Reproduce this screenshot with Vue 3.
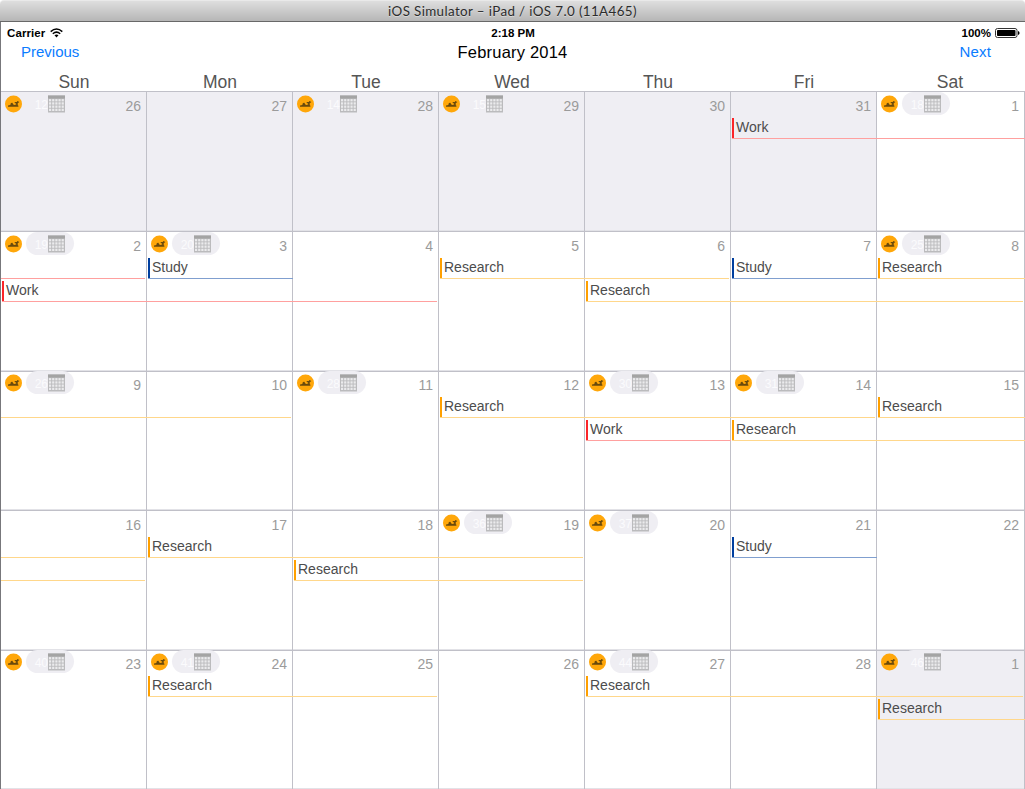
<script setup>
const names = ['Sun', 'Mon', 'Tue', 'Wed', 'Thu', 'Fri', 'Sat']
const ev = (kind, slot, label = '', short = false) => ({ kind, slot, label, short })
const weeks = [
  { shift: 0, days: [
    { n: 26, out: true, tag: 12 }, { n: 27, out: true }, { n: 28, out: true, tag: 14 },
    { n: 29, out: true, tag: 15 }, { n: 30, out: true },
    { n: 31, out: true, events: [ev('work', 0, 'Work')] },
    { n: 1, tag: 18, events: [ev('work', 0)] },
  ] },
  { shift: 0, days: [
    { n: 2, tag: 19, events: [ev('work', 0, '', true), ev('work', 1, 'Work')] },
    { n: 3, tag: 20, events: [ev('study', 0, 'Study'), ev('work', 1)] },
    { n: 4, events: [ev('work', 1, '', true)] },
    { n: 5, events: [ev('research', 0, 'Research')] },
    { n: 6, events: [ev('research', 0, '', true), ev('research', 1, 'Research')] },
    { n: 7, events: [ev('study', 0, 'Study'), ev('research', 1)] },
    { n: 8, tag: 25, events: [ev('research', 0, 'Research'), ev('research', 1, '', true)] },
  ] },
  { shift: -1, days: [
    { n: 9, tag: 26, events: [ev('research', 0)] },
    { n: 10, events: [ev('research', 0, '', true)] },
    { n: 11, tag: 28 },
    { n: 12, events: [ev('research', 0, 'Research')] },
    { n: 13, tag: 30, events: [ev('research', 0), ev('work', 1, 'Work')] },
    { n: 14, tag: 31, events: [ev('research', 0, '', true), ev('research', 1, 'Research')] },
    { n: 15, events: [ev('research', 0, 'Research'), ev('research', 1)] },
  ] },
  { shift: 0, days: [
    { n: 16, events: [ev('research', 0, '', true), ev('research', 1, '', true)] },
    { n: 17, events: [ev('research', 0, 'Research')] },
    { n: 18, events: [ev('research', 0), ev('research', 1, 'Research')] },
    { n: 19, tag: 36, events: [ev('research', 0, '', true), ev('research', 1, '', true)] },
    { n: 20, tag: 37 },
    { n: 21, events: [ev('study', 0, 'Study')] },
    { n: 22 },
  ] },
  { shift: -1, days: [
    { n: 23, tag: 40 },
    { n: 24, tag: 41, events: [ev('research', 0, 'Research')] },
    { n: 25, events: [ev('research', 0, '', true)] },
    { n: 26 },
    { n: 27, tag: 44, events: [ev('research', 0, 'Research')] },
    { n: 28, events: [ev('research', 0)] },
    { n: 1, out: true, tag: 46, events: [ev('research', 0, '', true), ev('research', 1, 'Research')] },
  ] },
]
const at = (day, slot) => (day.events || []).find((e) => e.slot === slot)
</script>

<template>
  <div class="window">
    <header class="titlebar">iOS Simulator – iPad / iOS 7.0 (11A465)</header>
    <div class="screen">
      <div class="status">
        <span class="carrier">Carrier
          <svg class="wifi" width="13" height="10" viewBox="0 0 13 10">
            <g fill="none" stroke="#000" stroke-width="1.5">
              <path d="M.7 3.6Q6.5-1.6 12.3 3.6" />
              <path d="M2.8 5.8Q6.5 2.5 10.2 5.8" />
            </g>
            <path d="M4.5 7.3Q6.5 5.6 8.5 7.3L6.5 9.4Z" />
          </svg>
        </span>
        <span class="clock">2:18 PM</span>
        <span class="power">100%
          <svg class="battery" width="25" height="10" viewBox="0 0 25 10">
            <rect x=".5" y=".5" width="21.5" height="9" rx="2" fill="none" stroke="#333" />
            <rect x="2" y="2" width="18.5" height="6" rx=".8" />
            <path d="M23 3Q24.6 3.4 24.6 5T23 7Z" />
          </svg>
        </span>
      </div>
      <nav class="nav">
        <a class="prev">Previous</a>
        <h1>February 2014</h1>
        <a class="next">Next</a>
      </nav>
      <div class="names"><span v-for="name in names" :key="name">{{ name }}</span></div>
      <main class="grid">
        <template v-for="(week, w) in weeks" :key="w">
          <section v-for="(day, d) in week.days" :key="d" class="day" :class="{ out: day.out }">
            <div class="content" :class="{ raised: week.shift }">
              <div class="top">
                <template v-if="day.tag">
                  <svg class="badge" width="17" height="18" viewBox="0 0 17 18">
                    <circle cx="8.5" cy="9" r="8.5" fill="#ffa70a" />
                    <path fill="#6a4a0c" d="M3 11.7V10.6L5.3 10 5.9 8 7.4 7.8 8.3 9.5 9.7 10.1 11.4 9.3 10.6 8.2 9.6 8 9.8 7 11.8 6.9 12.3 6 13.4 6.4 14.4 7.1 12.7 8.2 12.8 10.2 13.4 10.8V11.7Z" />
                  </svg>
                  <span class="pill">
                    <span class="tag">{{ day.tag }}</span>
                    <svg class="sheet" width="17" height="18" viewBox="0 0 17 18">
                      <rect y=".5" width="17" height="17" fill="#bbbbbd" />
                      <rect y=".5" width="17" height="3" fill="#a4a4a4" />
                      <g fill="#ebebed">
                        <template v-for="r in 4" :key="r">
                          <rect v-for="c in 5" :key="c" :x="c * 3.15 - 2.15" :y="r * 3.2 + 0.9" width="2.2" height="2.3" />
                        </template>
                      </g>
                    </svg>
                  </span>
                </template>
                <span class="number">{{ day.n }}</span>
              </div>
              <div v-for="slot in [0, 1]" :key="slot" class="slot">
                <div
                  v-if="at(day, slot)"
                  class="event"
                  :class="[at(day, slot).kind, { start: at(day, slot).label, short: at(day, slot).short }]"
                >{{ at(day, slot).label }}</div>
              </div>
            </div>
          </section>
        </template>
      </main>
    </div>
  </div>
</template>

<style>
body { margin: 0; background: #fff; overflow: hidden; }
</style>

<style scoped>
.window {
  width: 1025px;
  height: 789px;
  box-sizing: border-box;
  overflow: hidden;
  background: #fff;
  font-family: "Liberation Sans", Arial, sans-serif;
}
.titlebar {
  height: 22px;
  box-sizing: border-box;
  border-top: 1px solid #e9e9e9;
  border-bottom: 1px solid #686868;
  border-radius: 4px 4px 0 0;
  background: linear-gradient(#dedede, #b6b6b6);
  color: #2c2c2c;
  font: 13.4px/20px "Lato", "Open Sans", sans-serif;
  letter-spacing: 0.37px;
  text-align: center;
  text-shadow: 0 1px 0 rgba(255, 255, 255, 0.4);
}
.screen { height: 767px; box-sizing: border-box; border-left: 1px solid #77777b; }
.status {
  display: grid;
  grid-template-columns: 1fr auto 1fr;
  height: 20px;
  padding: 0 5px 0 6px;
  font-size: 11.5px;
  font-weight: 700;
  line-height: 22px;
  color: #000;
}
.carrier, .power { display: flex; align-items: center; gap: 5px; }
.carrier { letter-spacing: 0.1px; }
.clock { margin-right: 1px; }
.power { justify-content: flex-end; gap: 4px; }
.nav {
  display: grid;
  grid-template-columns: 1fr auto 1fr;
  height: 29px;
  padding: 0 34px 0 20px;
  font-size: 15px;
  line-height: 20px;
}
.nav a { color: #0a7cff; }
.nav .next { text-align: right; letter-spacing: 0.15px; }
.nav h1 { margin: 0 -13px 0 0; font-size: 16.5px; font-weight: 400; line-height: 21px; letter-spacing: 0.2px; color: #000; }
.names {
  display: grid;
  grid-template-columns: repeat(7, 146px);
  height: 20px;
  font-size: 17.5px;
  line-height: 22px;
  text-align: center;
  color: #555;
}
.grid {
  display: grid;
  grid-template-columns: repeat(6, 146px) 148px;
  grid-template-rows: 140px 140px 139px 140px 139px;
}
.day {
  box-sizing: border-box;
  min-width: 0;
  border-top: 1px solid #c0c0c8;
  border-right: 1px solid #c0c0c8;
  box-shadow: inset 0 -1px #e2e2e7;
}
.day.out { background: #efeef3; }
.content { display: flex; flex-direction: column; margin-right: -1px; }
.raised { margin-top: -1px; }
.top { display: flex; height: 26px; padding-right: 6px; }
.badge { margin: 3px 4px 0; flex: none; }
.pill {
  display: flex;
  width: 48px;
  height: 23px;
  border-radius: 12px;
  background: #efeef3;
}
.tag { width: 22px; text-align: right; font-size: 12px; line-height: 26px; color: #fbfbfd; }
.sheet { margin-top: 3px; flex: none; }
.number { margin-left: auto; padding-top: 5px; font-size: 14px; line-height: 19px; color: #9b9b9b; }
.slot { height: 23px; }
.event {
  box-sizing: border-box;
  height: 21px;
  border-bottom: 1px solid;
  font-size: 14px;
  line-height: 19px;
}
.start { position: relative; margin-left: 1px; padding-left: 4px; }
.start::before { content: ""; position: absolute; left: 0; top: 0; width: 2px; height: 20px; background: var(--solid); }
.short { margin-right: 2px; }
.event { --line: #ffd78b; --solid: #ffa000; border-color: var(--line); color: #4c4c4c; }
.work { --line: #ffa09f; --solid: #fb2529; }
.study { --line: #809fcf; --solid: #003f9f; }
</style>
